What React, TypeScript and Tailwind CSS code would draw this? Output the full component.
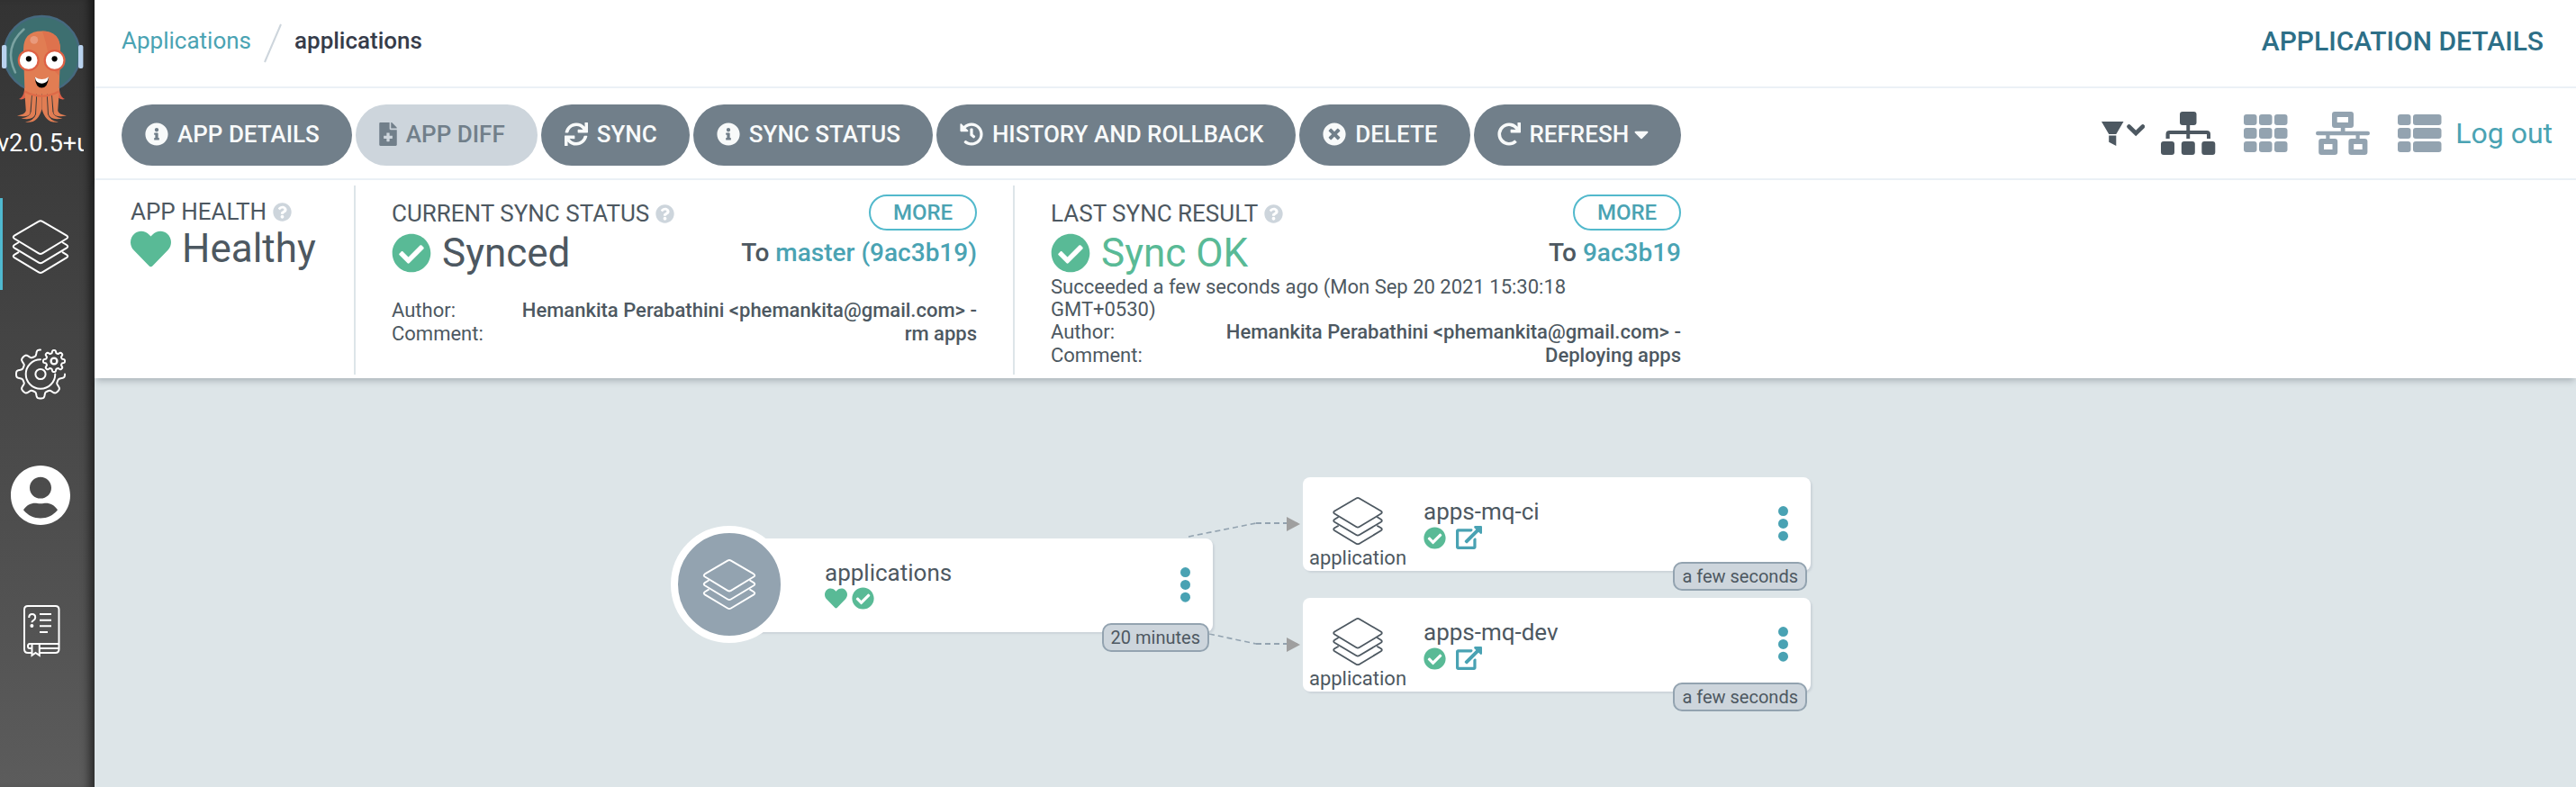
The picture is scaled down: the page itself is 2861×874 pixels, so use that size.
import type { ReactNode } from "react";
import {
  FaCaretDown,
  FaCheckCircle,
  FaFileMedical,
  FaHeart,
  FaHistory,
  FaInfoCircle,
  FaQuestionCircle,
  FaRedo,
  FaSync,
  FaTimesCircle,
} from "react-icons/fa";

/* ---------- drawings ---------- */

function LayersIcon({ className }: { className: string }) {
  return (
    <svg viewBox="-1 -1 64 62" className={className} fill="none" stroke="currentColor" strokeWidth="2" aria-hidden="true">
      <path d="M29 1.8Q31 .6 33 1.8L60 17.6Q62.5 19.3 60 21L33 37.4Q31 38.6 29 37.4L2 21Q-.5 19.3 2 17.6Z" />
      <path d="M7 25L2 28Q-.5 29.7 2 31.4L29 47.6Q31 48.8 33 47.6L60 31.4Q62.5 29.7 60 28L55 25" />
      <path d="M7 35.8L2 38.8Q-.5 40.5 2 42.2L29 58.4Q31 59.6 33 58.4L60 42.2Q62.5 40.5 60 38.8L55 35.8" />
    </svg>
  );
}

function ExternalLinkIcon() {
  return (
    <svg viewBox="0 0 576 512" className="h-[26px] w-[29px]" fill="currentColor" aria-hidden="true">
      <path d="M576 24v127.984c0 21.461-25.96 31.98-40.971 16.971l-35.707-35.709-243.523 243.523c-9.373 9.373-24.568 9.373-33.941 0l-22.627-22.627c-9.373-9.373-9.373-24.569 0-33.941L442.756 76.676l-35.703-35.705C391.982 25.9 402.656 0 424.024 0H552c13.255 0 24 10.745 24 24zM407.029 270.794l-16 16A23.999 23.999 0 0 0 384 303.765V448H64V128h264a24.003 24.003 0 0 0 16.97-7.029l16-16C376.089 89.851 365.381 64 344 64H48C21.49 64 0 85.49 0 112v352c0 26.51 21.49 48 48 48h352c26.51 0 48-21.49 48-48V287.764c0-21.382-25.852-32.09-40.971-16.97z" />
    </svg>
  );
}

function cogPath(cx: number, cy: number, inner: number, outer: number, from: number, to: number) {
  const mid = (inner + outer) / 2;
  const amp = (outer - inner) / 2;
  const points: string[] = [];
  for (let deg = from; deg <= to; deg += 2) {
    const a = (deg * Math.PI) / 180;
    const r = mid + (amp * Math.tanh(2.2 * Math.cos(8 * a))) / Math.tanh(2.2);
    points.push(`${(cx + r * Math.cos(a)).toFixed(2)} ${(cy - r * Math.sin(a)).toFixed(2)}`);
  }
  return "M" + points.join("L");
}

function GearsIcon() {
  return (
    <svg viewBox="0 4 92 102" className="h-[102px] w-[92px]" fill="none" stroke="white" strokeWidth="2" strokeLinecap="round" strokeLinejoin="round" aria-hidden="true">
      <path d={cogPath(45, 56.5, 20.5, 27, 90, 360)} />
      <path d="M45 40.2A16.3 16.3 0 1 0 61.3 56.5" />
      <circle cx="45" cy="56.5" r="5.6" />
      <path d={cogPath(60, 42, 9, 12, 0, 360)} />
      <circle cx="60" cy="42" r="3.4" strokeWidth="2.4" />
    </svg>
  );
}

function UserIcon() {
  return (
    <svg viewBox="0 4 92 102" className="h-[102px] w-[92px]" fill="white" aria-hidden="true">
      <path
        fillRule="evenodd"
        d="M45 15C63.500 15 78 29.500 78 48S63.500 81 45 81 12 66.500 12 48 26.500 15 45 15ZM45 27.800C38.400 27.800 33 33 33 39.700S38.400 51.600 45 51.600 57 46.300 57 39.700 51.600 27.800 45 27.800ZM26 64.300C31 70.500 37.500 73.500 45 73.500S59 70.500 64 64.300C60 58 54 56 48.500 56.900Q45 57.400 41.500 56.900C36 56 30 58 26 64.300Z"
      />
    </svg>
  );
}

function BookIcon() {
  return (
    <svg viewBox="0 4 92 102" className="h-[102px] w-[92px]" fill="none" stroke="white" strokeWidth="2" aria-hidden="true">
      <path d="M35 80H31Q27 80 27 76V32Q27 28 31 28H61.500Q65.500 28 65.500 32V76Q65.500 80 61.500 80H44" />
      <path d="M44 37H57M44 43.700H57M44 50.300H57M44 57H53" />
      <path d="M32.200 41Q32.200 37 35.700 37T39.200 40.500Q39.200 42.800 37.300 43.800T35.400 46.300" />
      <circle cx="35.400" cy="50" r="2" fill="white" stroke="none" />
      <path d="M65 70H33Q31 70 31 72.500T33 75H35M44 75H65" />
      <path d="M35.500 70.500V82.800L39.500 80L43.800 82.800V70.500" />
    </svg>
  );
}

function tentacles() {
  return (
    <>
      <path d="M27 100Q26 108 21 110Q25 111.500 29 108Z" fill="#dd5f48" />
      <path d="M27 98L28.800 123Q28 127 19 128.500Q31 131 33.300 126L35 106L36 98Z" />
      <path d="M34 98L35.800 106L34.600 124Q33.500 130 23.500 131.500Q37 134 39 127L40.200 106V98Z" />
      <path d="M39 98L41 108L40 127Q37.500 134 28 135.500Q42 138 46.500 121V98Z" />
    </>
  );
}

function ArgoLogo() {
  return (
    <svg viewBox="0 0 93 141" className="h-[141px] w-[93px]" aria-label="Argo" role="img">
      <circle cx="46.500" cy="60" r="42" fill="#3d6f70" stroke="#46697f" strokeWidth="2.500" />
      <rect x="2" y="50" width="5.400" height="26" rx="2" fill="#b9d2ee" />
      <rect x="87" y="50" width="5.400" height="26" rx="2" fill="#b9d2ee" />
      <path d="M26.500 32.500Q3.500 53 17 80.500" fill="none" stroke="#7ba3a2" strokeWidth="2.500" strokeLinecap="round" />
      <g fill="#e17d53">
        <path d="M26 55Q26 34.500 46.500 34.500T67 55L65.500 104H27.500Z" />
        {tentacles()}
        <g transform="translate(93 0) scale(-1 1)">{tentacles()}</g>
      </g>
      <path d="M47 34.500Q67 35 67 56L66 84Q57 78 54 62T47 34.500Z" fill="#de724d" />
      <path d="M27.500 101.500Q46.500 112 65.500 101.500" fill="none" stroke="#dd6a48" strokeWidth="2.200" />
      <circle cx="37.800" cy="44.300" r="4.400" fill="#e99a7c" />
      <circle cx="31.700" cy="67" r="12" fill="#de6044" />
      <circle cx="60.600" cy="67" r="12" fill="#de6044" />
      <circle cx="31.700" cy="67" r="9.800" fill="white" />
      <circle cx="60.600" cy="67" r="9.800" fill="white" />
      <circle cx="31.900" cy="65.300" r="3.100" fill="black" />
      <circle cx="60.600" cy="65.300" r="3.100" fill="black" />
      <path d="M38.800 86Q46.500 92 54 86Q53 97.500 46.300 97.500T38.800 86Z" fill="black" />
      <path d="M38.800 85.500Q46.500 90.500 54 85.500Q53.500 89 51.500 91Q46.500 94.500 41.300 91Q39.200 89 38.800 85.500Z" fill="white" />
    </svg>
  );
}

function FilterIcon() {
  return (
    <svg viewBox="0 0 48 27" className="h-[27px] w-12" fill="currentColor" aria-hidden="true">
      <path d="M0 0H24.500L16.300 14H8.200ZM8.200 15.500H16.300V27L8.200 22.800Z" />
      <path d="M30.500 5.500L38.200 13L45.900 5.500" fill="none" stroke="currentColor" strokeWidth="4.600" strokeLinecap="round" />
    </svg>
  );
}

function TreeIcon() {
  return (
    <svg viewBox="0 0 61 48" className="h-12 w-[61px]" fill="currentColor" aria-hidden="true">
      <rect x="21" width="18.500" height="15" rx="3" />
      <path d="M28.300 14H32.200V21H51Q55 21 55 25V30H51V25H32.200V30H28.300V25H9.700V30H5.500V25Q5.500 21 9.500 21H28.300Z" />
      <rect y="33" width="15" height="15" rx="3" />
      <rect x="22.800" y="33" width="15" height="15" rx="3" />
      <rect x="45.300" y="33" width="15" height="15" rx="3" />
    </svg>
  );
}

function PodsIcon() {
  return (
    <svg viewBox="0 0 49 42" className="h-[42px] w-[49px]" fill="currentColor" aria-hidden="true">
      {[0, 15, 30].map((y) => [0, 17, 34].map((x) => <rect key={`${x}-${y}`} x={x} y={y} width="14.500" height="12" rx="3" />))}
    </svg>
  );
}

function NetworkIcon() {
  return (
    <svg viewBox="0 0 60 48" className="h-12 w-[60px]" fill="currentColor" fillRule="evenodd" aria-hidden="true">
      <path d="M21 0H39Q42 0 42 3V15Q42 18 39 18H32.500V22H27.800V18H21Q18 18 18 15V3Q18 0 21 0ZM23.700 6V12H36V6Z" />
      <rect y="21.800" width="60" height="4.400" rx="2.200" />
      <path d="M11.300 25H15.500V30H21Q24.200 30 24.200 33V45Q24.200 48 21 48H6.200Q3.200 48 3.200 45V33Q3.200 30 6.200 30H11.300ZM9 36V42H18.500V36Z" />
      <path d="M44.500 25H48.700V30H54.200Q57.400 30 57.400 33V45Q57.400 48 54.200 48H39.400Q36.400 48 36.400 45V33Q36.400 30 39.400 30H44.500ZM42.200 36V42H51.700V36Z" />
    </svg>
  );
}

function ListIcon() {
  return (
    <svg viewBox="0 0 49 42" className="h-[42px] w-[49px]" fill="currentColor" aria-hidden="true">
      {[0, 15, 30].map((y) => (
        <g key={y}>
          <rect y={y} width="14.500" height="12" rx="3" />
          <rect x="17" y={y} width="31.500" height="12" rx="3" />
        </g>
      ))}
    </svg>
  );
}

/* ---------- sidebar ---------- */

function Sidebar() {
  const items = [
    { label: "Applications", icon: <LayersIcon className="ml-[10px] mt-[6px] h-[62px] w-16" />, active: true },
    { label: "Settings", icon: <GearsIcon />, active: false },
    { label: "User info", icon: <UserIcon />, active: false },
    { label: "Documentation", icon: <BookIcon />, active: false },
  ];
  return (
    <aside className="w-[105px] shrink-0 bg-linear-to-b from-[#333333] to-[#5c5c5c] text-white shadow-[inset_-12px_0_10px_-6px_rgba(0,0,0,0.5)]">
      <ArgoLogo />
      <div className="w-[93px] overflow-hidden whitespace-nowrap -indent-[3px] text-[27px] leading-9">v2.0.5+u</div>
      <nav className="mt-[43px] flex flex-col gap-[41px]">
        {items.map((item) => (
          <a
            key={item.label}
            href="#"
            aria-label={item.label}
            className={item.active ? "flex h-[102px] items-center border-l-3 border-[#4fb9d0]" : "flex h-[102px] items-center"}
          >
            {item.icon}
          </a>
        ))}
      </nav>
    </aside>
  );
}

/* ---------- header and toolbar ---------- */

function PageHeader() {
  return (
    <header className="flex h-[98px] items-center justify-between border-b-2 border-[#ebf1f6] pb-[5px] pl-[30px] pr-9">
      <div className="flex items-center text-[26px]">
        <a href="#" className="text-[#4aa3b3]">Applications</a>
        <svg viewBox="0 0 20 44" className="mx-[14px] mt-1 h-11 w-5" aria-hidden="true">
          <path d="M19 1L1 43" stroke="#cdd5dc" strokeWidth="2" />
        </svg>
        <span className="font-medium text-[#363c4a]">applications</span>
      </div>
      <h1 className="text-[30px] font-medium leading-9 text-[#2d6f87]">APPLICATION DETAILS</h1>
    </header>
  );
}

function ToolButton({ icon, children, disabled = false }: { icon: ReactNode; children: ReactNode; disabled?: boolean }) {
  return (
    <button
      type="button"
      disabled={disabled}
      className="flex h-[68px] items-center gap-[10px] whitespace-nowrap rounded-full bg-[#717f8a] pb-[2px] pl-[26px] pr-9 text-[26px] font-medium text-[#f8fafa] disabled:bg-[#cdd5dc] disabled:text-[#717f8a]"
    >
      {icon}
      <span className="flex items-center">{children}</span>
    </button>
  );
}

function Toolbar() {
  return (
    <div className="flex h-[102px] items-center justify-between border-b-2 border-[#ebf1f6] pl-[30px] pr-[26px] pt-1">
      <div className="flex gap-1">
        <ToolButton icon={<FaInfoCircle />}>APP DETAILS</ToolButton>
        <ToolButton icon={<FaFileMedical className="w-5" />} disabled>APP DIFF</ToolButton>
        <ToolButton icon={<FaSync />}>SYNC</ToolButton>
        <ToolButton icon={<FaInfoCircle />}>SYNC STATUS</ToolButton>
        <ToolButton icon={<FaHistory />}>HISTORY AND ROLLBACK</ToolButton>
        <ToolButton icon={<FaTimesCircle />}>DELETE</ToolButton>
        <ToolButton icon={<FaRedo />}>
          REFRESH
          <FaCaretDown className="ml-[6px] w-4" />
        </ToolButton>
      </div>
      <div className="flex items-center pb-1 text-[#4d5861]">
        <button type="button" aria-label="Filter"><FilterIcon /></button>
        <div className="ml-[18px] mr-[15px] flex items-center gap-[31px] text-[#93a3b0]">
          <button type="button" aria-label="Tree" className="text-[#4d5861]"><TreeIcon /></button>
          <button type="button" aria-label="Pods"><PodsIcon /></button>
          <button type="button" aria-label="Network"><NetworkIcon /></button>
          <button type="button" aria-label="List"><ListIcon /></button>
        </div>
        <a href="#" className="text-[32px] leading-10 text-[#4aa3b3]">Log out</a>
      </div>
    </div>
  );
}

/* ---------- status panel ---------- */

function StatusTitle({ children }: { children: ReactNode }) {
  return (
    <h2 className="flex h-10 items-center gap-[7px] whitespace-nowrap pt-[2px] text-[26px]">
      {children}
      <FaQuestionCircle className="size-[21px] text-[#cdd5dc]" />
    </h2>
  );
}

function MoreButton() {
  return (
    <button type="button" className="h-10 w-[120px] rounded-full border-2 border-[#52b9cc] text-[24px] font-medium leading-9 text-[#4aa3b3]">
      MORE
    </button>
  );
}

function CommitInfo({ comment }: { comment: string }) {
  return (
    <dl className="flex justify-between">
      <dt>
        Author:
        <br />
        Comment:
      </dt>
      <dd className="text-right font-medium">
        Hemankita Perabathini &lt;phemankita@gmail.com&gt; -
        <br />
        {comment}
      </dd>
    </dl>
  );
}

function StatusPanel() {
  return (
    <section className="relative z-10 flex h-[220px] bg-white pt-[6px] text-[22px] leading-[26px] text-[#4d5861] shadow-[0_5px_7px_-2px_rgba(80,90,100,0.35)]">
      <div className="h-[210px] w-[290px] border-r-2 border-[#dde5e9] pl-10 pt-2">
        <StatusTitle>APP HEALTH</StatusTitle>
        <div className="flex h-[44px] items-center gap-3 whitespace-nowrap text-[44px] leading-[44px]">
          <FaHeart className="size-[45px] text-[#59ba96]" />
          Healthy
        </div>
      </div>
      <div className="h-[210px] w-[732px] border-r-2 border-[#dde5e9] pl-10 pr-10 pt-[10px]">
        <div className="flex items-center justify-between">
          <StatusTitle>CURRENT SYNC STATUS</StatusTitle>
          <MoreButton />
        </div>
        <div className="flex h-[50px] items-center justify-between">
          <div className="flex items-center gap-3 text-[44px] leading-[44px]">
            <FaCheckCircle className="text-[#59ba96]" />
            Synced
          </div>
          <div className="text-[28px] font-medium">
            To <a href="#" className="text-[#4aa3b3]">master (9ac3b19)</a>
          </div>
        </div>
        <div className="mt-[26px]">
          <CommitInfo comment="rm apps" />
        </div>
      </div>
      <div className="h-[210px] w-[740px] pl-10 pt-[10px]">
        <div className="flex items-center justify-between">
          <StatusTitle>LAST SYNC RESULT</StatusTitle>
          <MoreButton />
        </div>
        <div className="flex h-[50px] items-center justify-between">
          <div className="flex items-center gap-3 text-[44px] leading-[44px] text-[#59ba96]">
            <FaCheckCircle />
            Sync OK
          </div>
          <div className="text-[28px] font-medium">
            To <a href="#" className="text-[#4aa3b3]">9ac3b19</a>
          </div>
        </div>
        <p className="pr-8 leading-[25px]">Succeeded a few seconds ago (Mon Sep 20 2021 15:30:18 GMT+0530)</p>
        <CommitInfo comment="Deploying apps" />
      </div>
    </section>
  );
}

/* ---------- resource tree ---------- */

function DotsButton() {
  return (
    <button type="button" aria-label="Actions" className="absolute right-[25px] top-8 text-[#49a2b3]">
      <svg viewBox="0 0 11 40" className="h-10 w-[11px]" fill="currentColor" aria-hidden="true">
        <circle cx="5.500" cy="5.600" r="5.500" />
        <circle cx="5.500" cy="19.400" r="5.500" />
        <circle cx="5.500" cy="33.200" r="5.500" />
      </svg>
    </button>
  );
}

function AgeBadge({ children }: { children: ReactNode }) {
  return (
    <span className="absolute -bottom-[22px] right-1 h-8 whitespace-nowrap rounded-[10px] border-2 border-[#93a3b0] bg-[#cdd5dc] px-2 text-[20px] leading-7">
      {children}
    </span>
  );
}

const cardClass = "absolute h-[104px] w-[564px] rounded-lg bg-white shadow-[2px_2px_2px_#ccd4da]";

function AppNode({ name, className }: { name: string; className: string }) {
  return (
    <article className={className}>
      <div className="flex h-full">
        <div className="flex w-[122px] flex-col items-center pt-[21px]">
          <LayersIcon className="h-[58px] w-[60px]" />
          <span className="text-[22px] leading-7">application</span>
        </div>
        <div className="pl-3 pt-[22px]">
          <div className="text-[26px] leading-8">{name}</div>
          <div className="flex items-center gap-[11px] text-[25px]">
            <FaCheckCircle className="text-[#59ba96]" />
            <a href="#" aria-label={`Open ${name}`} className="text-[#49a2b3]">
              <ExternalLinkIcon />
            </a>
          </div>
        </div>
      </div>
      <DotsButton />
      <AgeBadge>a few seconds</AgeBadge>
    </article>
  );
}

function ResourceTree() {
  return (
    <section className="relative grow overflow-hidden bg-[#dde5e8] text-[#4d5861]">
      <svg viewBox="0 0 130 160" className="absolute left-[1213px] top-[150px] h-[160px] w-[130px]" fill="none" stroke="#93a3b0" strokeWidth="2" aria-hidden="true">
        <path d="M2 26L77 11" strokeDasharray="6 4" strokeWidth="1.600" />
        <path d="M77 11H127" strokeDasharray="6 4" />
        <path d="M25 134L77 145" strokeDasharray="6 4" strokeWidth="1.600" />
        <path d="M77 145H127" strokeDasharray="6 4" />
        <path d="M111 4L126 12L111 20ZM111 138L126 146L111 154Z" fill="#9f9f9f" stroke="none" />
      </svg>
      <article className={`${cardClass} left-[678px] top-[178px]`}>
        <div className="absolute -left-[38px] -top-[14px] flex size-[130px] items-center justify-center rounded-full border-8 border-white bg-[#93a3b0] text-white">
          <LayersIcon className="h-[58px] w-[60px]" />
        </div>
        <div className="pl-[133px] pt-[22px]">
          <div className="text-[26px] leading-8">applications</div>
          <div className="flex items-center gap-[5px] text-[25px] text-[#59ba96]">
            <FaHeart />
            <FaCheckCircle />
          </div>
        </div>
        <DotsButton />
        <AgeBadge>20 minutes</AgeBadge>
      </article>
      <AppNode name="apps-mq-ci" className={`${cardClass} left-[1342px] top-[110px]`} />
      <AppNode name="apps-mq-dev" className={`${cardClass} left-[1342px] top-[244px]`} />
    </section>
  );
}

export default function App() {
  return (
    <div className="flex min-h-screen bg-white font-[Roboto,sans-serif]">
      <Sidebar />
      <main className="flex min-w-0 grow flex-col">
        <PageHeader />
        <Toolbar />
        <StatusPanel />
        <ResourceTree />
      </main>
    </div>
  );
}
